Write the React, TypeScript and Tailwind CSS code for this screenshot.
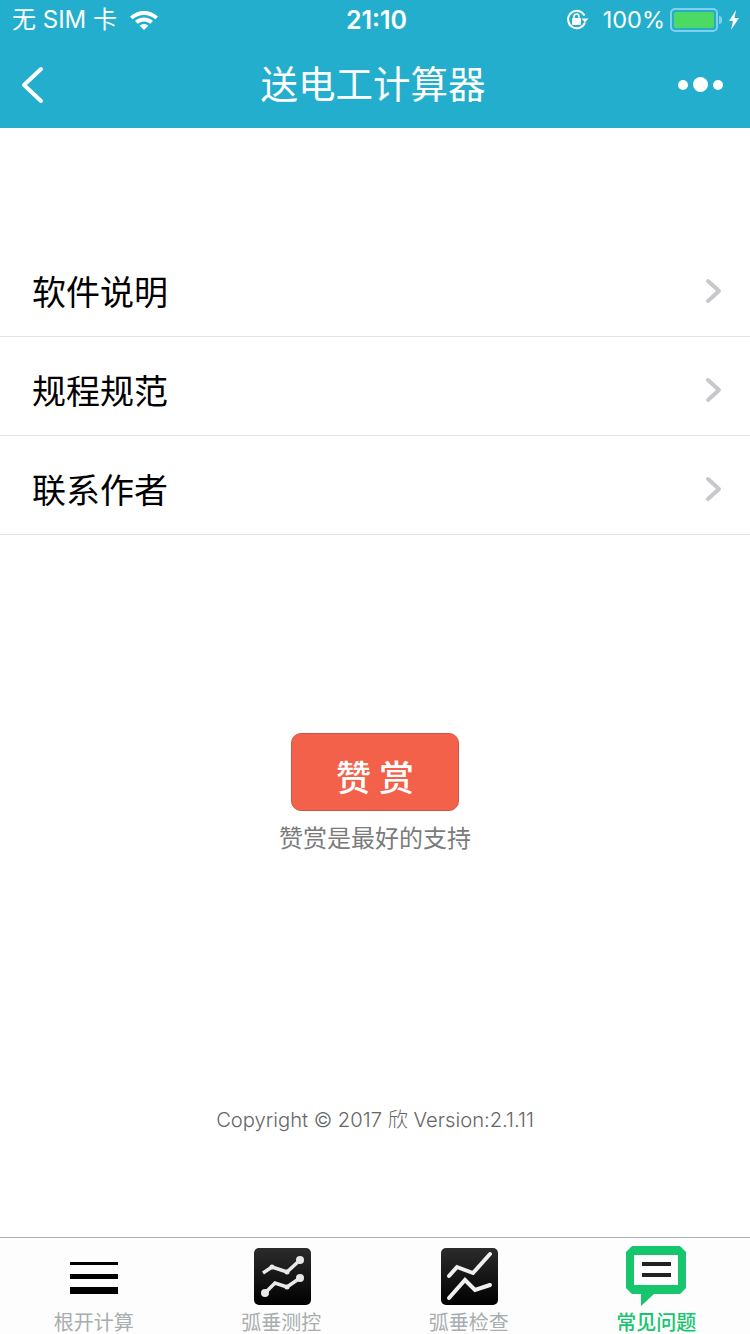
const FONT = "font-['Noto_Sans_CJK_SC','Noto_Sans',sans-serif]";

const MENU_ITEMS = ["软件说明", "规程规范", "联系作者"];

function Chevron() {
  return (
    <svg width="18" height="26" viewBox="0 0 18 26" fill="none" stroke="#c7c7cc" strokeWidth="4" strokeLinecap="round" strokeLinejoin="round">
      <polyline points="3,3 14,13 3,23" />
    </svg>
  );
}

function StatusBar() {
  return (
    <div className="relative flex h-10 items-center pl-3 pr-[10px] text-white">
      <span className="text-[24px] leading-none whitespace-nowrap font-['Inter','Noto_Sans_CJK_SC',sans-serif]">无 SIM 卡</span>
      <svg className="ml-3" width="30" height="22" viewBox="0 0 30 22" fill="white">
        <path d="M15 2C9.5 2 5 4 1 7.5l2.6 2.8C6.7 7.6 10.6 6 15 6s8.3 1.6 11.4 4.3L29 7.5C25 4 20.5 2 15 2z" />
        <path d="M15 8.6c-3.500 0-6.700 1.300-9 3.400l2.700 2.800c1.700-1.500 3.900-2.400 6.300-2.400s4.600.9 6.300 2.400l2.700-2.800c-2.300-2.100-5.500-3.400-9-3.400z" />
        <path d="M15 15c-1.700 0-3.200.6-4.400 1.600L15 21l4.400-4.400C18.200 15.600 16.700 15 15 15z" />
      </svg>
      <span className="absolute left-[3px] right-0 text-center text-[25px] leading-none font-semibold font-['Inter',sans-serif]">21:10</span>
      <div className="ml-auto flex items-center">
        <svg width="24" height="24" viewBox="0 0 24 24" fill="none">
          <path d="M20 14.500A8.700 8.700 0 1 1 19.500 7.500" stroke="white" strokeWidth="2" />
          <path d="M16.500 10.500h7l-3.500 4z" fill="white" />
          <rect x="7" y="10" width="9" height="7" rx="1" fill="white" />
          <path d="M9 10V8.500a2.500 2.500 0 0 1 5 0V10" stroke="white" strokeWidth="1.500" />
        </svg>
        <span className="ml-[14px] text-[23.500px] leading-none font-['Inter',sans-serif]">100%</span>
        <div className="ml-[5px] flex h-[24px] w-[48px] items-center rounded-[5px] border-2 border-[#7fd0e8] p-[2px]">
          <div className="h-full w-full rounded-[2px] bg-[#4cd964]" />
        </div>
        <div className="ml-[1px] h-[8px] w-[3px] rounded-r-sm bg-[#7fd0e8]" />
        <svg className="ml-[6px]" width="12" height="22" viewBox="0 0 12 22" fill="white">
          <path d="M8 1 1 12h4l-2 9 8-12H6.500z" />
        </svg>
      </div>
    </div>
  );
}

function NavBar() {
  return (
    <div className="relative flex h-[88px] items-center justify-center pb-[4px] pr-[4px]">
      <svg className="absolute left-[20px] top-[26px]" width="26" height="38" viewBox="0 0 26 38" fill="none" stroke="white" strokeWidth="4" strokeLinecap="round" strokeLinejoin="round">
        <polyline points="21,3 4,19 21,35" />
      </svg>
      <h1 className={`text-[37.500px] leading-none text-white ${FONT}`}>送电工计算器</h1>
      <div className="absolute right-[27px] top-[37px] flex items-center gap-[5px]">
        <span className="h-[10px] w-[10px] rounded-full bg-white" />
        <span className="h-[15px] w-[15px] rounded-full bg-white" />
        <span className="h-[10px] w-[10px] rounded-full bg-white" />
      </div>
    </div>
  );
}

function TabItem({ label, active, children }: { label: string; active?: boolean; children: React.ReactNode }) {
  return (
    <div className="flex flex-col items-center">
      <div className="flex h-[66px] items-start justify-center">{children}</div>
      <span className={`text-[20px] leading-none ${FONT} ${active ? "font-medium text-[#16c66d]" : "text-[#a8adad]"}`}>{label}</span>
    </div>
  );
}

function ChartTile({ id, className, children }: { id: string; className: string; children: React.ReactNode }) {
  return (
    <svg className={className} width="57" height="57" viewBox="0 0 57 57">
      <defs>
        <linearGradient id={id} x1="0" y1="0" x2="0" y2="1">
          <stop offset="0" stopColor="#2c2c2c" />
          <stop offset="1" stopColor="#000000" />
        </linearGradient>
      </defs>
      <rect width="57" height="57" rx="5" fill={`url(#${id})`} />
      {children}
    </svg>
  );
}

export default function App() {
  return (
    <div className="flex h-[1334px] w-[750px] flex-col overflow-hidden bg-white">
      <div className="bg-[#22aecc]">
        <StatusBar />
        <NavBar />
      </div>

      <div className="mt-[110px]">
        {MENU_ITEMS.map((item) => (
          <div key={item} className="flex h-[99px] items-center justify-between border-b border-[#e5e5e5] pl-[32px] pr-[27px] pt-[8px]">
            <span className={`text-[34px] leading-none text-black ${FONT}`}>{item}</span>
            <Chevron />
          </div>
        ))}
      </div>

      <div className="mt-[198px] flex flex-col items-center">
        <button className={`flex h-[78px] w-[168px] items-center justify-center rounded-[10px] border border-[#cf5644] bg-[#f4614a] pt-[6px] text-[35px] font-medium leading-none text-white ${FONT}`}>
          赞 赏
        </button>
        <p className={`mt-[14px] text-[24px] leading-none text-[#7b7b7b] ${FONT}`}>赞赏是最好的支持</p>
      </div>

      <p className={`mt-[261px] text-center text-[20.200px] font-light leading-none text-[#666] font-['Inter','Noto_Sans_CJK_SC',sans-serif]`}>
        Copyright © 2017 欣 Version:2.1.11
      </p>

      <div className="mt-auto grid h-[97px] grid-cols-4 border-t border-[#b2b2b2] bg-[#fdfdfd] pt-[8px]">
        <TabItem label="根开计算">
          <div className="mt-[16px] flex w-[48px] flex-col">
            <div className="h-[3px] bg-black" />
            <div className="mt-[9px] h-[5px] bg-black" />
            <div className="mt-[8px] h-[7px] bg-black" />
          </div>
        </TabItem>
        <TabItem label="弧垂测控">
          <ChartTile id="tile-a" className="ml-[2px] mt-[2px]">
            <g fill="none" stroke="#e8e8e8" strokeWidth="3.500">
              <polyline points="9,25 18,19 33,24 46,12" />
              <polyline points="11,45 21,35 33,39 46,30" />
            </g>
            <g fill="#e8e8e8">
              <circle cx="46" cy="12" r="4" />
              <circle cx="33" cy="24" r="2.500" />
              <circle cx="18" cy="19" r="2.500" />
              <circle cx="46" cy="30" r="4" />
              <circle cx="11" cy="45" r="4" />
              <circle cx="33" cy="39" r="2.500" />
            </g>
          </ChartTile>
        </TabItem>
        <TabItem label="弧垂检查">
          <ChartTile id="tile-b" className="ml-[1px] mt-[2px]">
            <g fill="none" stroke="#f0f0f0" strokeWidth="4" strokeLinecap="round">
              <polyline points="8,28 16,19 32,25 49,6" />
              <polyline points="8,50 24,32 34,42 49,37" />
            </g>
          </ChartTile>
        </TabItem>
        <TabItem active label="常见问题">
          <svg width="60" height="60" viewBox="0 0 60 60">
            <path d="M6 0h48l6 6v36l-6 6H28L15 60V48H6l-6-6V6z" fill="#16c66d" />
            <rect x="8" y="9" width="44" height="30" fill="white" />
            <rect x="16" y="16" width="29" height="4" fill="#222" />
            <rect x="16" y="27" width="29" height="4" fill="#222" />
          </svg>
        </TabItem>
      </div>
    </div>
  );
}
